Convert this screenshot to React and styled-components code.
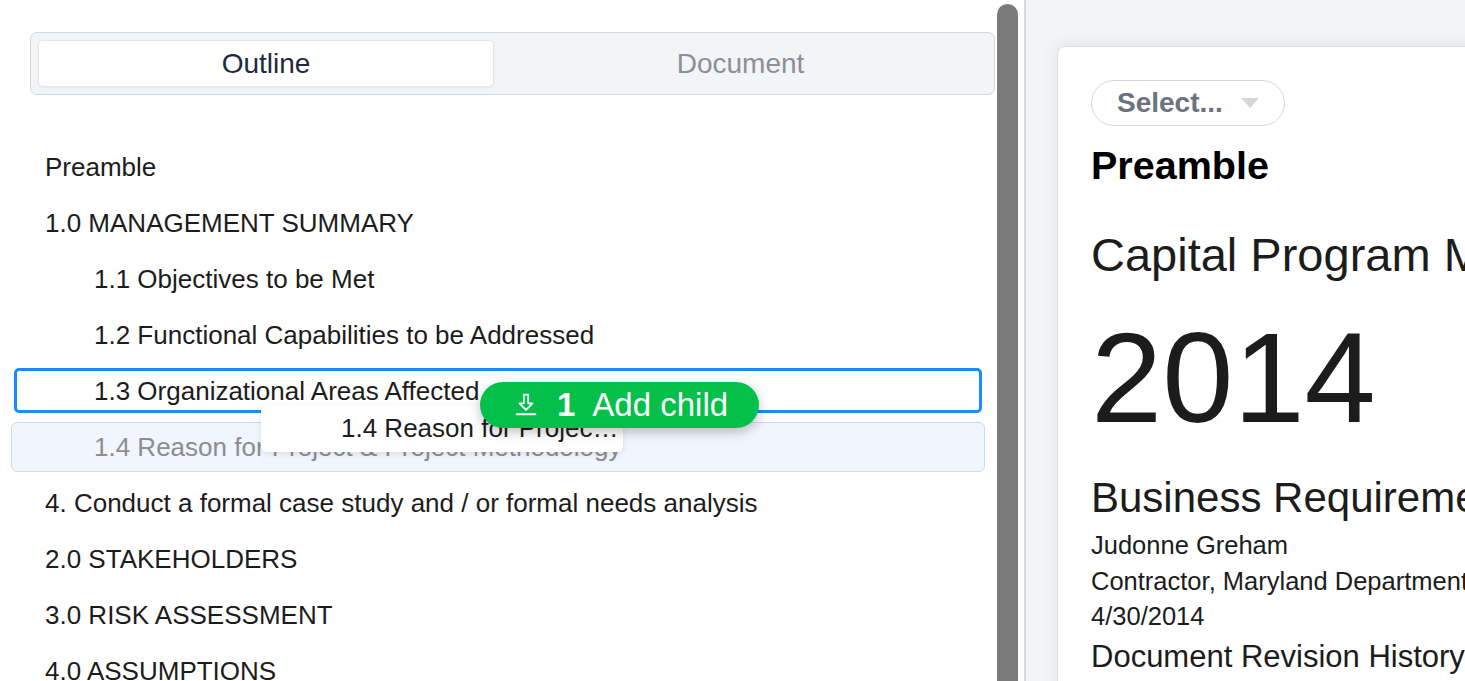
import React from 'react';
import styled, { createGlobalStyle, css } from 'styled-components';

const GlobalStyle = createGlobalStyle`
    html, body {
        margin: 0;
        padding: 0;
        background: #ffffff;
    }
    body {
        font-family: "Liberation Sans", Arial, sans-serif;
        overflow: hidden;
    }
`;

const outline = [
    { id: 'pre', label: 'Preamble', level: 0 },
    { id: '1.0', label: '1.0 MANAGEMENT SUMMARY', level: 0 },
    { id: '1.1', label: '1.1 Objectives to be Met', level: 1 },
    { id: '1.2', label: '1.2 Functional Capabilities to be Addressed', level: 1 },
    { id: '1.3', label: '1.3 Organizational Areas Affected', level: 1, state: 'target' },
    { id: '1.4', label: '1.4 Reason for Project & Project Methodology', level: 1, state: 'dragging' },
    { id: '4.', label: '4. Conduct a formal case study and / or formal needs analysis', level: 0 },
    { id: '2.0', label: '2.0 STAKEHOLDERS', level: 0 },
    { id: '3.0', label: '3.0 RISK ASSESSMENT', level: 0 },
    { id: '4.0', label: '4.0 ASSUMPTIONS', level: 0 },
];

const DropIcon = () => (
    <svg width="24" height="24" viewBox="0 0 22 22" fill="none">
        <path d="M9 1.5 H13 V9.5 H17 L11 15.5 L5 9.5 H9 Z" stroke="#fff" strokeWidth="1.6" strokeLinejoin="round" />
        <path d="M2.5 19.5 H19.5" stroke="#fff" strokeWidth="2" strokeLinecap="round" />
    </svg>
);

const App = () => {
    return (
        <Page>
            <GlobalStyle />
            <OutlinePanel>
                <Tabs>
                    <Tab $active>Outline</Tab>
                    <Tab>Document</Tab>
                </Tabs>

                <OutlineList>
                    {outline.map((item) => (
                        <Row key={item.id} $level={item.level} $state={item.state}>
                            {item.label}
                        </Row>
                    ))}
                </OutlineList>

                {/* drag preview + drop hint */}
                <DragGhost>1.4 Reason for Project &amp; Project Methodology</DragGhost>
                <DropBadge>
                    <DropIcon />
                    <BadgeCount>1</BadgeCount>
                    <span>Add child</span>
                </DropBadge>
            </OutlinePanel>

            <ScrollTrack>
                <ScrollThumb />
            </ScrollTrack>

            <DocPanel>
                <Card>
                    <SelectPill>
                        Select...
                        <Caret />
                    </SelectPill>
                    <SectionTitle>Preamble</SectionTitle>
                    <DocTitle>Capital Program Management System</DocTitle>
                    <YearText>2014</YearText>
                    <DocSubtitle>Business Requirements Document</DocSubtitle>
                    <MetaLine>Judonne Greham</MetaLine>
                    <MetaLine>Contractor, Maryland Department of Information Technology</MetaLine>
                    <MetaLine>4/30/2014</MetaLine>
                    <RevisionTitle>Document Revision History</RevisionTitle>
                </Card>
            </DocPanel>
        </Page>
    );
};

export default App;

// Styled Components
const Page = styled.div`
    display: flex;
    width: 1465px;
    height: 681px;
    overflow: hidden;
    background: #ffffff;
`;

const OutlinePanel = styled.div`
    position: relative;
    flex: 0 0 997px;
    box-sizing: border-box;
    padding: 32px 12px 0 11px;
    overflow: hidden;
`;

const Tabs = styled.div`
    display: grid;
    grid-template-columns: 456px 1fr;
    height: 63px;
    box-sizing: border-box;
    margin: 0 -10px 0 19px;
    padding: 7px;
    background: #f3f4f6;
    border: 1.5px solid #d3d6dc;
    border-radius: 7px;
`;

const Tab = styled.div`
    display: flex;
    align-items: center;
    justify-content: center;
    font-size: 28px;
    color: #8a9099;
    border-radius: 5px;
    border: 1px solid transparent;

    ${({ $active }) => $active && css`
        background: #ffffff;
        color: #1e293b;
        border-color: #e2e5e9;
        box-shadow: 0 1px 2px rgba(0, 0, 0, 0.05);
    `}
`;

const OutlineList = styled.div`
    display: flex;
    flex-direction: column;
    gap: 6px;
    margin-top: 47px;
`;

const Row = styled.div`
    position: relative;
    display: flex;
    align-items: center;
    height: 50px;
    box-sizing: border-box;
    padding-left: ${({ $level }) => 33 + $level * 49}px;
    font-size: 26px;
    color: #1c1c1c;
    white-space: nowrap;
    border: 1px solid transparent;
    border-radius: 6px;

    ${({ $state }) => $state === 'target' && css`
        &::after {
            content: '';
            position: absolute;
            inset: 1px 2px 2px 2px;
            border: 3px solid #1a8cff;
            border-radius: 5px;
        }
    `}

    ${({ $state }) => $state === 'dragging' && css`
        background: #f1f6fe;
        border-color: #c3dcfa;
        color: #8d8d8d;
    `}
`;

const DragGhost = styled.div`
    position: absolute;
    left: 261px;
    top: 405px;
    width: 362px;
    height: 47px;
    box-sizing: border-box;
    padding: 0 0 0 80px;
    background: #ffffff;
    border-radius: 6px;
    box-shadow: 0 2px 6px rgba(0, 0, 0, 0.1);
    font-size: 26px;
    line-height: 47px;
    color: #1c1c1c;
    white-space: nowrap;
    overflow: hidden;
    text-overflow: ellipsis;
`;

const DropBadge = styled.div`
    position: absolute;
    left: 480px;
    top: 382px;
    height: 46px;
    box-sizing: border-box;
    display: flex;
    align-items: center;
    gap: 17px;
    padding: 0 31px 0 34px;
    background: #02c04a;
    border-radius: 23px;
    box-shadow: 0 4px 12px rgba(0, 0, 0, 0.25);
    color: #ffffff;
    font-size: 33px;
    white-space: nowrap;

    svg {
        margin-right: 2px;
    }
`;

const BadgeCount = styled.span`
    font-weight: bold;
`;

const ScrollTrack = styled.div`
    flex: 0 0 21px;
    padding-top: 4px;
    margin-right: 6px;
    display: flex;
`;

const ScrollThumb = styled.div`
    flex: 1;
    background: #7a7a7a;
    border-radius: 11px 11px 0 0;
`;

const DocPanel = styled.div`
    flex: 1;
    min-width: 0;
    overflow: hidden;
    background: #f3f4f6;
    border-left: 2px solid #d5d9e0;
    padding: 46px 0 0 31px;
`;

const Card = styled.div`
    width: 900px;
    min-height: 700px;
    box-sizing: border-box;
    padding: 33px 33px 0 33px;
    background: #ffffff;
    border: 1px solid #dcdfe4;
    border-radius: 8px;
    box-shadow: 0 0 18px rgba(0, 0, 0, 0.08);
    color: #1c1c1c;
    white-space: nowrap;
`;

const SelectPill = styled.div`
    display: inline-flex;
    align-items: center;
    gap: 18px;
    height: 46px;
    box-sizing: border-box;
    padding: 0 25px 0 25px;
    border: 1.5px solid #d5d8dd;
    border-radius: 23px;
    font-size: 28px;
    font-weight: bold;
    color: #6b7280;
`;

const Caret = styled.span`
    width: 0;
    height: 0;
    border-left: 9px solid transparent;
    border-right: 9px solid transparent;
    border-top: 10px solid #d3d6db;
`;

const SectionTitle = styled.div`
    margin-top: 16px;
    font-size: 39.5px;
    line-height: 46px;
    font-weight: bold;
    color: #000000;
`;

const DocTitle = styled.div`
    margin-top: 39px;
    font-size: 47px;
    line-height: 56px;
`;

const YearText = styled.div`
    margin-top: 25px;
    font-size: 128px;
    line-height: 140px;
`;

const DocSubtitle = styled.div`
    margin-top: 25px;
    font-size: 42px;
    line-height: 50px;
    margin-bottom: 5px;
`;

const MetaLine = styled.div`
    font-size: 25.5px;
    line-height: 35.5px;
`;

const RevisionTitle = styled.div`
    font-size: 31px;
    line-height: 44px;
`;
